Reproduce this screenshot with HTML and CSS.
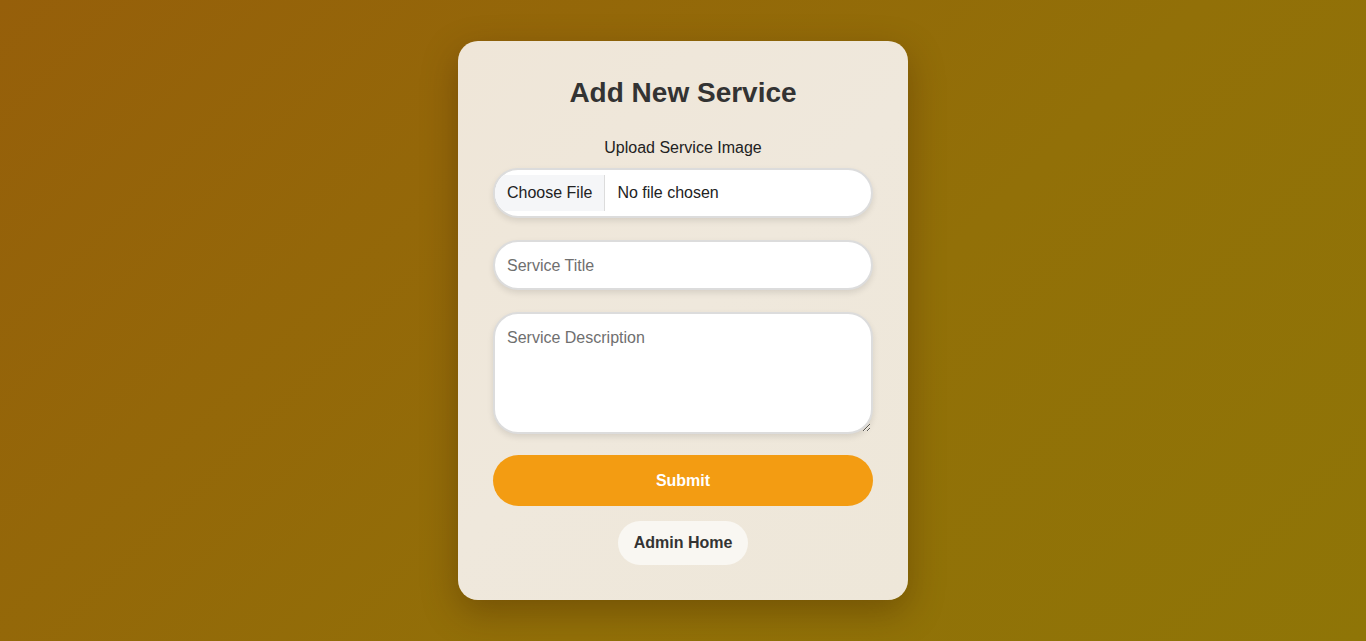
FILE: index.html
```html
<!DOCTYPE html>
<html lang="en">
<head>
<meta charset="utf-8">
<title>Add New Service</title>
<link rel="stylesheet" href="styles.css">
</head>
<body>
<main class="page">
  <form class="card">
    <h2 class="card-title">Add New Service</h2>
    <label class="upload-label" for="img">Upload Service Image</label>
    <input class="field file-field" id="img" type="file">
    <input class="field text-field" type="text" placeholder="Service Title">
    <textarea class="field area-field" placeholder="Service Description"></textarea>
    <button class="submit-btn" type="button">Submit</button>
    <div class="home-row"><a class="home-btn" href="#">Admin Home</a></div>
  </form>
</main>
</body>
</html>
```

FILE: styles.css
```css
* { box-sizing: border-box; }
html, body { margin: 0; height: 100%; }
body {
  font-family: "Liberation Sans", Arial, sans-serif;
  background: linear-gradient(135deg, #965f0a 0%, #927008 60%, #8f7507 100%);
  color: #333;
}
.page {
  min-height: 100%;
  display: flex;
  justify-content: center;
  padding-top: 41px;
}
.card {
  width: 450px;
  height: 559px;
  background: linear-gradient(135deg, #efe6d8 0%, #efe8dc 50%, #eee7d9 100%);
  border-radius: 20px;
  padding: 36px 35px 35px;
  box-shadow: 0 12px 35px rgba(60, 30, 0, 0.35);
  display: flex;
  flex-direction: column;
}
.card-title {
  margin: 0 0 29px;
  font-size: 28px;
  font-weight: bold;
  text-align: center;
  color: #333;
  line-height: 32px;
}
.upload-label {
  display: block;
  text-align: center;
  font-size: 16px;
  line-height: 19px;
  color: #222;
  margin-bottom: 11px;
}
.field {
  width: 100%;
  border: 2px solid #dcdcdc;
  border-radius: 25px;
  background: #fff;
  font-family: "Liberation Sans", Arial, sans-serif;
  font-size: 16px;
  color: #333;
  box-shadow: 0 3px 6px rgba(0, 0, 0, 0.1);
  outline: none;
  margin: 0 0 22px;
  flex: none;
}
.field::placeholder { color: #6f6f6f; }
.file-field {
  height: 50px;
  padding: 5px 0;
  color: #222;
  overflow: hidden;
}
.file-field::file-selector-button {
  height: 36px;
  margin: 0 12px 0 0;
  padding: 0 12px;
  border: none;
  border-right: 1px solid #dcdcdc;
  background: #f5f6f8;
  color: #222;
  font-family: "Liberation Sans", Arial, sans-serif;
  font-size: 16px;
}
.text-field {
  height: 50px;
  padding: 1px 12px 0;
}
.area-field {
  height: 122px;
  padding: 15px 12px 14px;
  resize: vertical;
  margin-bottom: 21px;
  display: block;
}
.submit-btn {
  flex: none;
  height: 51px;
  width: 100%;
  border: none;
  border-radius: 26px;
  background: #f39c12;
  color: #fff;
  font-family: "Liberation Sans", Arial, sans-serif;
  font-size: 16px;
  font-weight: bold;
  margin-bottom: 15px;
}
.home-row {
  display: flex;
  justify-content: center;
}
.home-btn {
  display: block;
  padding: 13px 16px;
  line-height: 18px;
  border-radius: 22px;
  background: #f9f7f2;
  color: #333;
  font-size: 16px;
  font-weight: bold;
  text-decoration: none;
}
```
